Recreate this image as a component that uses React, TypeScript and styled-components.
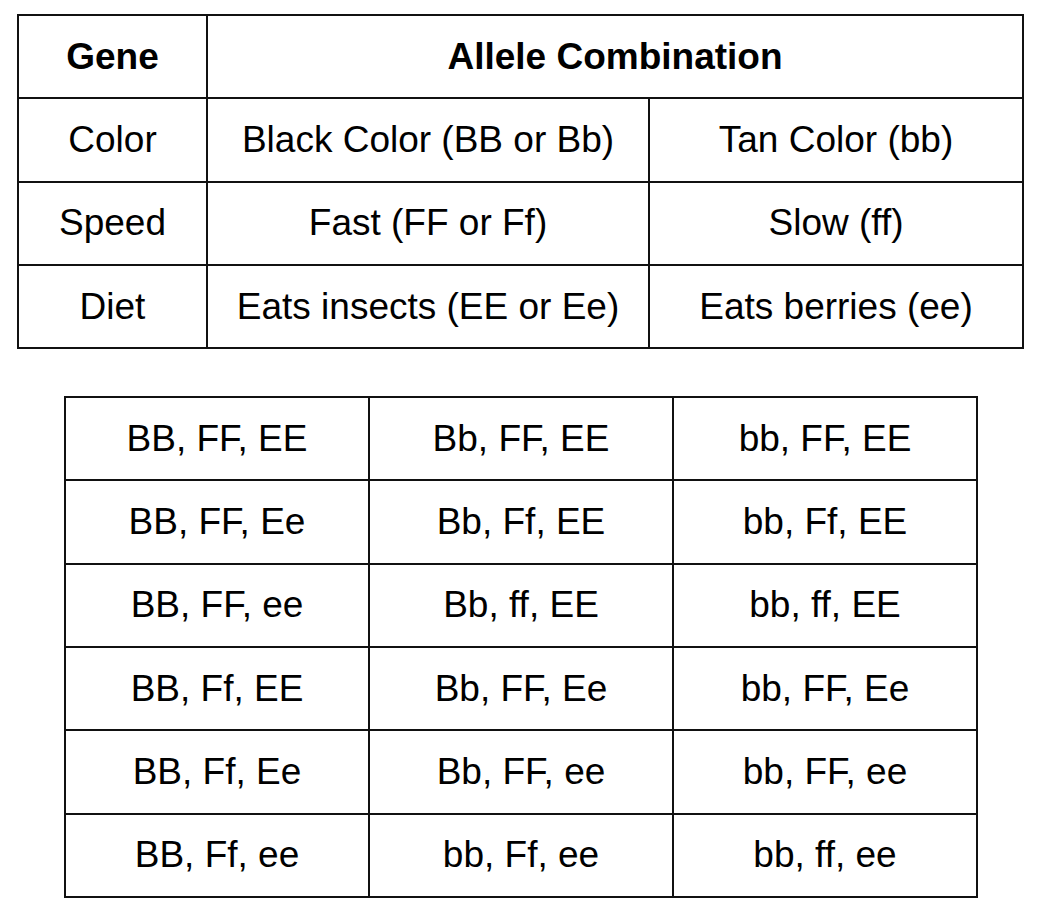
import React from "react";
import styled, { createGlobalStyle } from "styled-components";

const Global = createGlobalStyle`
  html, body { margin: 0; padding: 0; background: #fff; }
  body { font-family: "Liberation Sans", Arial, sans-serif; color: #000; }
`;

const Page = styled.div`
  display: flex;
  flex-direction: column;
  padding: 14px 0 0 17px;
  gap: 47px;
`;

const Table = styled.table<{ $width: number; $indent?: number }>`
  border-collapse: collapse;
  table-layout: fixed;
  width: ${(p) => p.$width}px;
  margin-left: ${(p) => p.$indent ?? 0}px;
  font-size: 37px;
`;

const Col = styled.col<{ $w: number }>`
  width: ${(p) => p.$w}px;
`;

const Cell = styled.td<{ $bold?: boolean }>`
  border: 2px solid #111;
  height: 81.3px;
  padding: 0;
  text-align: center;
  vertical-align: middle;
  font-weight: ${(p) => (p.$bold ? 700 : 400)};
  white-space: nowrap;
`;

const traits = [
  ["Color", "Black Color (BB or Bb)", "Tan Color (bb)"],
  ["Speed", "Fast (FF or Ff)", "Slow (ff)"],
  ["Diet", "Eats insects (EE or Ee)", "Eats berries (ee)"],
];

const combos = [
  ["BB, FF, EE", "Bb, FF, EE", "bb, FF, EE"],
  ["BB, FF, Ee", "Bb, Ff, EE", "bb, Ff, EE"],
  ["BB, FF, ee", "Bb, ff, EE", "bb, ff, EE"],
  ["BB, Ff, EE", "Bb, FF, Ee", "bb, FF, Ee"],
  ["BB, Ff, Ee", "Bb, FF, ee", "bb, FF, ee"],
  ["BB, Ff, ee", "bb, Ff, ee", "bb, ff, ee"],
];

export default function App() {
  return (
    <>
      <Global />
      <Page>
        <Table $width={1005}>
          <colgroup>
            <Col $w={189} />
            <Col $w={442} />
            <Col $w={374} />
          </colgroup>
          <tbody>
            <tr>
              <Cell $bold>Gene</Cell>
              <Cell $bold colSpan={2}>
                Allele Combination
              </Cell>
            </tr>
            {traits.map((r) => (
              <tr key={r[0]}>
                {r.map((c) => (
                  <Cell key={c}>{c}</Cell>
                ))}
              </tr>
            ))}
          </tbody>
        </Table>
        <Table $width={912} $indent={47}>
          <colgroup>
            <Col $w={304} />
            <Col $w={304} />
            <Col $w={304} />
          </colgroup>
          <tbody>
            {combos.map((r, i) => (
              <tr key={i}>
                {r.map((c, j) => (
                  <Cell key={j}>{c}</Cell>
                ))}
              </tr>
            ))}
          </tbody>
        </Table>
      </Page>
    </>
  );
}
